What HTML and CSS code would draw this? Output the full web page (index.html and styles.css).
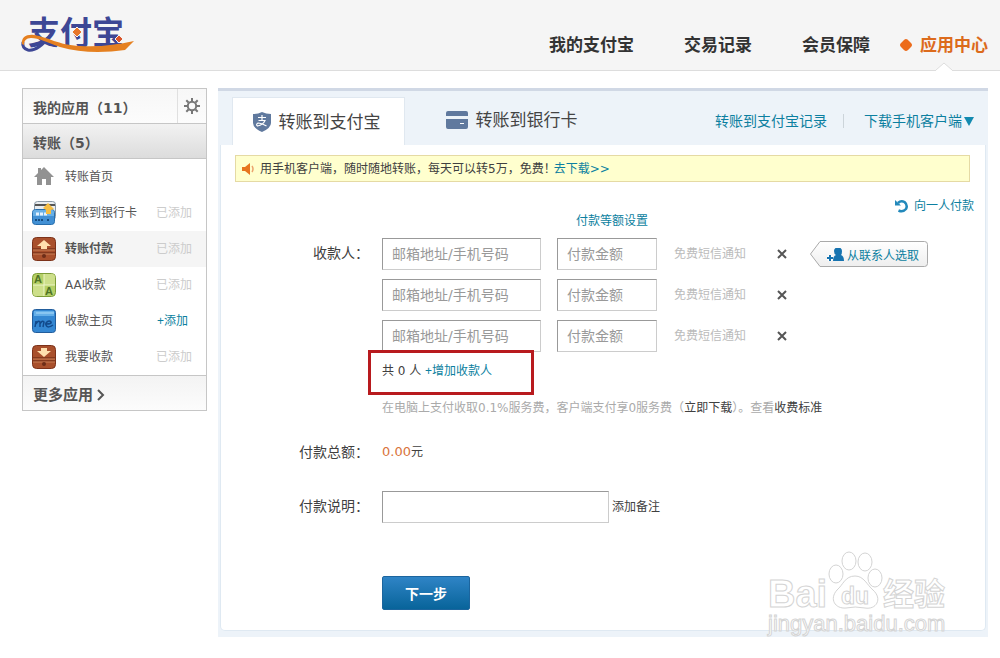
FILE: index.html
```html
<!DOCTYPE html>
<html lang="zh-CN">
<head>
<meta charset="utf-8">
<title>支付宝</title>
<link rel="stylesheet" href="styles.css">
</head>
<body>
<header class="header">
  <a class="logo" href="#" aria-label="支付宝">
    <svg width="120" height="56" viewBox="0 -8 120 56">
      <text class="logo-word" x="8" y="31">支付宝</text>
      <path d="M30 23C22 33 14 38 8 37C4 36 2 33 3 29" fill="none" stroke="#3d4795" stroke-width="3"/>
      <path d="M2 31C1 24 7 21 14 22C28 24 38 32 60 33C80 34 96 32 114 28L105 37C84 40 60 40 40 34C26 29 19 25 11 25C6 25 4 28 4 32Z" fill="#e58020"/>
      <path d="M57 14l5 5-5 5-5-5z" fill="#e8772a" stroke="#f5f5f5"/><path d="M99 22l4 4-4 4-4-4z" fill="#d9562c" stroke="#f5f5f5"/>
    </svg>
  </a>
  <nav class="nav">
    <a href="#">我的支付宝</a>
    <a href="#">交易记录</a>
    <a href="#">会员保障</a>
    <a class="current" href="#"><svg width="12" height="12" viewBox="0 0 12 12"><path d="M6 0Q7.500 0 9 2L11 4Q13 6 11 8L8 11Q6 13 4 11L1 8Q-1 6 1 4L4 1Q5 0 6 0Z" fill="#ec6c1c"/></svg>应用中心</a>
  </nav>
  <svg class="notch" width="16" height="9" viewBox="0 0 16 9"><path d="M0 8L8 1L16 8V9H0Z" fill="#fff"/><path d="M0 8L8 1L16 8" fill="none" stroke="#ddd"/></svg>
</header>

<div class="page">
  <aside class="sidebar">
    <div class="side-head">
      <h2>我的应用（11）</h2>
      <button class="gear" aria-label="设置"><svg width="16" height="16" viewBox="0 0 16 16"><circle cx="8" cy="8" r="4.200" fill="none" stroke="#777" stroke-width="2"/><path d="M8 0v3M8 13v3M0 8h3M13 8h3M2.300 2.300l2.200 2.200M11.500 11.500l2.200 2.200M2.300 13.700l2.200-2.200M11.500 4.500l2.200-2.200" stroke="#777" stroke-width="2"/></svg></button>
    </div>
    <h3 class="side-group">转账（5）</h3>
    <ul class="apps">
      <li><svg width="24" height="24" viewBox="0 0 24 24"><path d="M12 2l10 10h-3v8h-5v-6h-4v6H5v-8H2l4-4V3h3v2z" fill="#929292"/></svg><a href="#">转账首页</a></li>
      <li><svg width="24" height="24" viewBox="0 0 24 24"><rect x="2.500" y=".5" width="21" height="18" rx="3" fill="#e9edf0" stroke="#8998a5"/><path d="M3 3h20v2H3z" fill="#555"/><rect x=".5" y="8.500" width="22" height="15" rx="3" fill="#4290d4" stroke="#286eac"/><path d="M1 11q0-2 2-2h17q2 0 2 2v4H1z" fill="#69b0e6"/><path d="M4 13h11" stroke="#e4f2ff" stroke-width="3" stroke-dasharray="3 1"/><path d="M3 19h9M15 19h3" stroke="#174e83" stroke-width="2" stroke-dasharray="2 1"/><path d="M16 2l6 6-3 1v4h-5V9l-3-2z" fill="#f5bd42"/></svg><a href="#">转账到银行卡</a><span class="state">已添加</span></li>
      <li class="selected"><svg width="24" height="24" viewBox="0 0 24 24"><rect x=".5" y=".5" width="23" height="23" rx="4" fill="#a9502c" stroke="#7c321a"/><path d="M1 12h22M1 16h22" stroke="#632510"/><path d="M1 13h22M1 17h22" stroke="#cc8056"/><path d="M12 3l7 6h-4v3H9V9H5z" fill="#ffe0ae"/><circle cx="12" cy="19" r="2" fill="#6d2d18"/></svg><a href="#">转账付款</a><span class="state">已添加</span></li>
      <li><svg width="24" height="24" viewBox="0 0 24 24"><rect x=".5" y=".5" width="23" height="23" rx="4" fill="#b5d067" stroke="#7d9c37"/><path d="M12 1h8a3 3 0 0 1 3 3v8H12zM1 12h11v11H4a3 3 0 0 1-3-3z" fill="#cddf8a"/><path d="M12 1v22M1 12h22" stroke="#edf5c8"/><text class="icon-aa" x="2" y="10">A</text><text class="icon-aa" x="13" y="22">A</text></svg><a href="#">AA收款</a><span class="state">已添加</span></li>
      <li><svg width="24" height="24" viewBox="0 0 24 24"><rect x=".5" y=".5" width="23" height="23" rx="3" fill="#3487d2" stroke="#225d9c"/><path d="M2 2h20v5H2z" fill="#65afe8"/><path d="M4 4h18" stroke="#aedcfa"/><path d="M3 18l1-6v3q2-4 4-2v5M8 15q2-4 4-2l-1 5M14 15q6 0 5-2c-2-3-6 1-5 3 1 3 4 2 7 0" fill="none" stroke="#124a8c" stroke-width="1.500"/></svg><a href="#">收款主页</a><a class="add" href="#">+添加</a></li>
      <li><svg width="24" height="24" viewBox="0 0 24 24"><rect x=".5" y=".5" width="23" height="23" rx="4" fill="#a9502c" stroke="#7c321a"/><path d="M1 13h22M1 16h22" stroke="#632510"/><path d="M1 14h22M1 17h22" stroke="#cc8056"/><path d="M12 12l7-6h-4V3H9v3H5z" fill="#ffe0ae"/><circle cx="12" cy="19" r="2" fill="#6d2d18"/></svg><a href="#">我要收款</a><span class="state">已添加</span></li>
    </ul>
    <a class="more" href="#">更多应用<svg width="8" height="12" viewBox="0 0 8 12"><path d="M1 1l5 5-5 5" fill="none" stroke="#555" stroke-width="2"/></svg></a>
  </aside>

  <main class="main">
    <div class="tabs">
      <a class="tab active" href="#"><svg width="18" height="20" viewBox="0 0 18 20"><path d="M0 2Q5 2 9 0Q13 2 18 2V11Q18 16 9 20Q0 16 0 11Z" fill="#60799e"/><path d="M5 5.500h8M9 3v5M5.500 8.500H12Q10 13 4.500 14Q2.500 12.500 5 11Q8 11 13.500 14" fill="none" stroke="#fff" stroke-width="1.200"/></svg>转账到支付宝</a>
      <a class="tab" href="#"><svg width="22" height="18" viewBox="0 0 22 18"><path d="M2 0h18a2 2 0 0 1 2 2v3H0V2a2 2 0 0 1 2-2zM0 8h22v8a2 2 0 0 1-2 2H2a2 2 0 0 1-2-2z" fill="#60799e"/><path d="M14 12.500h4" stroke="#fff"/></svg>转账到银行卡</a>
      <div class="tab-links"><a href="#">转账到支付宝记录</a><span class="divider"></span><a class="download" href="#">下载手机客户端<svg width="10" height="9" viewBox="0 0 10 9"><path d="M0 0h10L5 9z" fill="#138ab0"/></svg></a></div>
    </div>
    <form class="panel">
      <p class="notice"><svg width="12" height="12" viewBox="0 0 12 12"><path d="M0 4h3l5-4v12L3 8H0z" fill="#e77520"/><path d="M10 3q2 3 0 6" fill="none" stroke="#eba36d" stroke-width="1.500"/></svg><span>用手机客户端，随时随地转账，每天可以转5万，免费！</span><a href="#">去下载&gt;&gt;</a></p>
      <div class="options">
        <a class="equal" href="#">付款等额设置</a>
        <a class="single" href="#"><svg width="14" height="14" viewBox="0 0 14 14"><path d="M3 4Q6 1 9.500 3Q13 6 11 10Q8 13.500 3.500 11.500" fill="none" stroke="#2389bb" stroke-width="2.500"/><path d="M0 1V6.500H6z" fill="#2389bb"/></svg>向一人付款</a>
      </div>
      <div class="row">
        <label for="payee1">收款人：</label>
        <div class="payees">
          <div class="payee">
            <input id="payee1" class="account" placeholder="邮箱地址/手机号码"><input class="amount" aria-label="付款金额" placeholder="付款金额"><span class="sms">免费短信通知</span>
            <button type="button" class="remove" aria-label="删除"><svg width="10" height="10" viewBox="0 0 10 10"><path d="M1 1l8 8M9 1l-8 8" stroke="#555" stroke-width="2"/></svg></button>
            <button type="button" class="contacts"><svg class="shape" width="118" height="26" viewBox="0 0 118 26"><defs><linearGradient id="tag" x2="0" y2="1"><stop stop-color="#fff"/><stop offset="1" stop-color="#eee"/></linearGradient></defs><path d="M10 .5H114.500Q117.500 .5 117.500 3.500V22.500Q117.500 25.500 114.500 25.500H10L.5 13Z" fill="url(#tag)" stroke="#aaa"/></svg><svg class="person" width="17" height="13" viewBox="0 0 17 13"><path d="M7 3a4 3.500 0 0 1 8 0q0 3-1 4 3 1 3 6H6q0-5 3-6Q7 6 7 3z" fill="#1673b0"/><path d="M0 10h6M3 7v6" stroke="#fff" stroke-width="4"/><path d="M0 10h6M3 7v6" stroke="#1673b0" stroke-width="2"/></svg><span>从联系人选取</span></button>
          </div>
          <div class="payee">
            <input class="account" aria-label="收款人" placeholder="邮箱地址/手机号码"><input class="amount" aria-label="付款金额" placeholder="付款金额"><span class="sms">免费短信通知</span>
            <button type="button" class="remove" aria-label="删除"><svg width="10" height="10" viewBox="0 0 10 10"><path d="M1 1l8 8M9 1l-8 8" stroke="#555" stroke-width="2"/></svg></button>
          </div>
          <div class="payee">
            <input class="account" aria-label="收款人" placeholder="邮箱地址/手机号码"><input class="amount" aria-label="付款金额" placeholder="付款金额"><span class="sms">免费短信通知</span>
            <button type="button" class="remove" aria-label="删除"><svg width="10" height="10" viewBox="0 0 10 10"><path d="M1 1l8 8M9 1l-8 8" stroke="#555" stroke-width="2"/></svg></button>
          </div>
          <p class="count">共 0 人 <a href="#">+增加收款人</a><span class="highlight"></span></p>
          <p class="fee">在电脑上支付收取0.1%服务费，客户端支付享0服务费（<a href="#">立即下载</a>）。查看<a href="#">收费标准</a></p>
        </div>
      </div>
      <div class="row total"><span class="label">付款总额：</span><p><span class="money">0.00</span>元</p></div>
      <div class="row remark"><label for="remark">付款说明：</label><p><input id="remark"><a href="#">添加备注</a></p></div>
      <div class="row"><span></span><button class="next">下一步</button></div>
    </form>
    <svg class="watermark" width="182" height="90" viewBox="0 0 182 90">
      <g fill="#fff" stroke="#d4d4d4">
        <ellipse cx="70" cy="27" rx="7" ry="9"/><ellipse cx="83" cy="14" rx="7" ry="9"/><ellipse cx="99" cy="15" rx="7" ry="9"/><ellipse cx="109" cy="31" rx="7" ry="9"/>
        <path d="M89 29C98 29 101 38 107 43C117 52 110 63 99 61Q89 59 80 61C69 62 63 52 71 43C77 38 79 29 89 29Z"/>
        <text class="wm-bai" x="2" y="60">Bai</text><text class="wm-du" x="75" y="57">du</text><text class="wm-cn" x="117" y="58">经验</text><text class="wm-url" x="2" y="84">jingyan.baidu.com</text>
      </g>
    </svg>
  </main>
</div>
</body>
</html>
```
FILE: styles.css
```css
* { box-sizing: border-box; }
body, h2, h3, p, ul { margin: 0; padding: 0; }
body { background: #fff; color: #404040; font: 12px/18px "DejaVu Sans", "Noto Sans CJK SC", sans-serif; }
a { color: #0c7fa0; text-decoration: none; }
svg { flex: none; display: block; }
button, input { font-family: inherit; }
button { padding: 0; border: 0; background: none; cursor: pointer; }

.header { position: relative; display: flex; justify-content: space-between; align-items: center; height: 71px; padding: 0 12px 0 20px; border-bottom: 1px solid #ddd; background: #f5f5f5; }
.logo { margin-bottom: 4px; }
.logo-word { font: bold 32px "Noto Sans CJK SC", sans-serif; fill: #3d4795; }
.nav { display: flex; gap: 50px; padding-top: 20px; }
.nav a { color: #333; font-size: 17px; font-weight: bold; line-height: 24px; }
.nav .current { display: flex; align-items: center; gap: 8px; margin-left: -20px; color: #dc6b1c; }
.notch { position: absolute; right: 48px; bottom: -1px; }

.page { display: flex; align-items: flex-start; gap: 11px; padding: 17px 12px 22px 22px; }

.sidebar { flex: none; width: 185px; border: 1px solid #c6c6c6; color: #555; }
.side-head { display: flex; height: 34px; background: linear-gradient(#f7f7f7, #fcfcfc); }
.side-head h2 { flex: 1; padding-left: 10px; font-size: 14px; line-height: 38px; }
.gear { display: grid; place-items: center; width: 29px; border-left: 1px solid #e0e0e0; }
.side-group { height: 36px; padding-left: 10px; border: 1px solid #c6c6c6; border-width: 1px 0; background: linear-gradient(#f2f2f2, #dcdcdc); font-size: 14px; line-height: 38px; }
.apps { list-style: none; }
.apps li { display: flex; align-items: center; height: 36px; padding: 0 14px 0 9px; }
.apps li > a:first-of-type { flex: 1; margin-left: 9px; color: #555; }
.apps .selected { background: #f5f5f5; font-weight: bold; }
.state { color: #ccc; font-weight: normal; }
.apps .add { margin-right: 4px; }
.add, .count a { font-family: "Liberation Sans", "Noto Sans CJK SC", sans-serif; }
.icon-aa { font: bold 11px "Liberation Sans", sans-serif; fill: #4e7225; }
.more { display: flex; align-items: center; gap: 4px; height: 35px; padding: 4px 10px 0; border-top: 1px solid #c6c6c6; background: linear-gradient(#f3f3f3, #fcfcfc); color: #555; font-size: 15px; font-weight: bold; }

.main { position: relative; flex: 1; padding: 0 2px 6px; border-top: 3px solid #d0d8e5; background: #edf3f9; }
.tabs { display: flex; height: 54px; padding: 6px 12px 0; }
.tab { display: flex; align-items: center; justify-content: center; gap: 8px; width: 173px; margin-right: 20px; padding-bottom: 3px; color: #444; font-size: 17px; line-height: 24px; }
.tab.active { padding: 0 4px 0 0; border: 1px solid #e0e8f0; border-bottom: 0; background: #fff; }
.tab-links { display: flex; align-items: center; margin-left: auto; font-size: 14px; }
.divider { width: 1px; height: 14px; margin: 0 20px 0 16px; background: #ccd4da; }
.download { display: flex; align-items: center; gap: 2px; }

.panel { padding: 10px 15px 20px 14px; border: 1px solid #dfe9f2; border-top: 0; border-radius: 0 0 5px 5px; background: #fff; }
.notice { display: flex; align-items: center; gap: 6px; height: 27px; padding: 0 6px; border: 1px solid #e5daa4; background: #ffffce; }
.notice a { margin-left: -8px; }
.options { display: flex; justify-content: space-between; height: 56px; padding: 15px 0 8px 341px; }
.options a { display: flex; align-items: center; gap: 5px; height: 18px; }
.options .equal { align-self: flex-end; }
.options .single { margin-right: -4px; }
.row { display: grid; grid-template-columns: 134px 1fr; gap: 13px; }
.row > label, .row > .label { font-size: 14px; line-height: 30px; text-align: right; white-space: nowrap; }
.payee { display: flex; align-items: center; height: 32px; margin-bottom: 9px; }
input { height: 32px; padding: 0 9px; border: 1px solid #ccc; border-top-color: #999; border-left-color: #999; background: #fff; color: #333; font-size: 14px; }
input::placeholder { color: #999; opacity: 1; }
.account { width: 159px; }
.amount { width: 100px; margin: 0 17px 0 16px; }
.sms { width: 103px; color: #bbb; }
.contacts { display: grid; grid-template-columns: 17px auto; gap: 3px; align-items: center; position: relative; height: 26px; margin-left: 23px; padding: 0 9px 0 17px; color: #0c7fa0; font-size: 12px; }
.contacts .shape { position: absolute; inset: 0; }
.contacts .person, .contacts span { position: relative; white-space: nowrap; }
.count { position: relative; height: 20px; line-height: 20px; }
.highlight { position: absolute; left: -14px; top: -11px; width: 166px; height: 45px; border: 3px solid #b81a1e; }
.fee { margin-top: 18px; color: #aaa; white-space: nowrap; }
.fee a, .remark a { color: #404040; }
.total { margin-top: 20px; }
.total p { line-height: 30px; }
.money { color: #d9743b; font-size: 13px; }
.remark { margin: 24px 0 53px; }
.remark p { display: flex; align-items: center; gap: 3px; }
.remark input { width: 227px; }
.next { width: 88px; height: 34px; border: 1px solid #1c659e; border-radius: 2px; background: linear-gradient(#2f84c6, #08649a); color: #fff; font-size: 14px; font-weight: bold; }

.watermark { position: absolute; right: 40px; bottom: 0; }
.wm-bai { font: bold 38px "Liberation Sans", sans-serif; }
.wm-du { font: bold 23px "Liberation Sans", sans-serif; }
.wm-cn { font: bold 31px "Noto Sans CJK SC", sans-serif; }
.wm-url { font: 22px "Liberation Sans", sans-serif; }
```
